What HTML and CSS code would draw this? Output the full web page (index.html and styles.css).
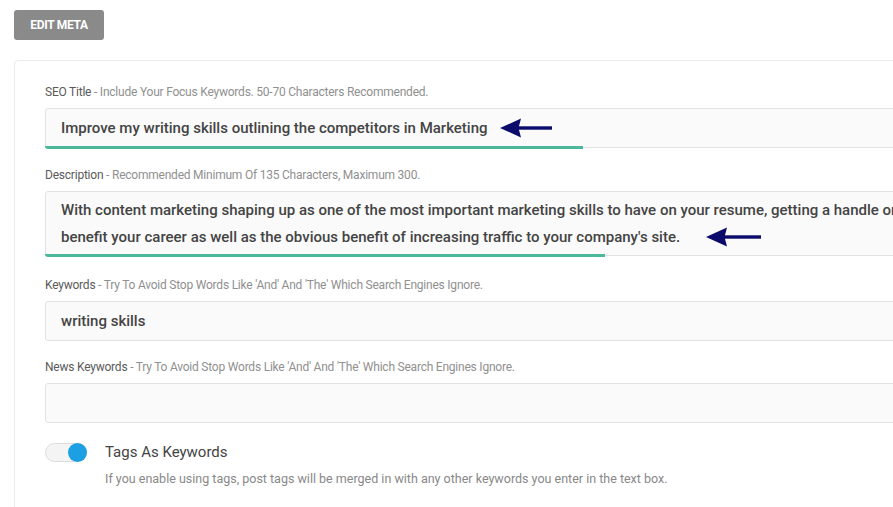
FILE: index.html
```html
<!DOCTYPE html>
<html lang="en">
<head>
    <meta charset="UTF-8">
    <meta name="viewport" content="width=device-width, initial-scale=1.0">
    <title>Edit Meta</title>
    <link rel="stylesheet" href="styles.css">
</head>
<body>
    <button class="edit-btn" type="button">EDIT META</button>

    <div class="card">
        <div class="field">
            <div class="label"><strong>SEO Title</strong> - Include Your Focus Keywords. 50-70 Characters Recommended.</div>
            <div class="input">
                <span>Improve my writing skills outlining the competitors in Marketing</span>
                <svg class="arrow arrow-title" width="52" height="20" viewBox="0 0 52 20">
                    <path d="M0 10 L21 0.5 L18.5 10 L21 19.5 Z" fill="#0b0b6b"/>
                    <rect x="18" y="8.3" width="34" height="3.4" fill="#0b0b6b"/>
                </svg>
                <div class="bar" style="width: 538px"></div>
            </div>
        </div>

        <div class="field field-desc">
            <div class="label"><strong>Description</strong> - Recommended Minimum Of 135 Characters, Maximum 300.</div>
            <div class="input textarea">
                <div class="line">With content marketing shaping up as one of the most important marketing skills to have on your resume, getting a handle on it</div>
                <div class="line">benefit your career as well as the obvious benefit of increasing traffic to your company's site.
                    <svg class="arrow arrow-desc" width="55" height="20" viewBox="0 0 55 20">
                        <path d="M0 10 L21 0.5 L18.5 10 L21 19.5 Z" fill="#0b0b6b"/>
                        <rect x="18" y="8.3" width="37" height="3.4" fill="#0b0b6b"/>
                    </svg>
                </div>
                <div class="bar" style="width: 560px"></div>
            </div>
        </div>

        <div class="field field-keywords">
            <div class="label"><strong>Keywords</strong> - Try To Avoid Stop Words Like 'And' And 'The' Which Search Engines Ignore.</div>
            <div class="input"><span>writing skills</span></div>
        </div>

        <div class="field">
            <div class="label"><strong>News Keywords</strong> - Try To Avoid Stop Words Like 'And' And 'The' Which Search Engines Ignore.</div>
            <div class="input"></div>
        </div>

        <div class="toggle-row">
            <div class="toggle"><div class="knob"></div></div>
            <div class="toggle-text">
                <div class="toggle-title">Tags As Keywords</div>
                <div class="toggle-desc">If you enable using tags, post tags will be merged in with any other keywords you enter in the text box.</div>
            </div>
        </div>
    </div>
</body>
</html>
```

FILE: styles.css
```css
body {
    margin: 0;
    padding: 10px 0 0 14px;
    font-family: Roboto, "Liberation Sans", sans-serif;
    background: #fff;
    overflow: hidden;
}
.edit-btn {
    display: block;
    width: 90px;
    height: 30px;
    padding: 0;
    border: none;
    border-radius: 3px;
    background: #8a8a8a;
    color: #fff;
    font-family: Roboto, "Liberation Sans", sans-serif;
    font-size: 12px;
    font-weight: 700;
    letter-spacing: -0.3px;
    margin-bottom: 20px;
}
.card {
    width: 1100px;
    border: 1px solid #ebebeb;
    border-radius: 4px;
    padding: 23px 30px 40px;
}
.field {
    margin-bottom: 19px;
}
.field-desc {
    margin-bottom: 21px;
}
.field-keywords {
    margin-bottom: 18px;
}
.label {
    font-size: 12px;
    line-height: 16px;
    color: #909090;
    margin-bottom: 8px;
    letter-spacing: -0.22px;
}
.label strong {
    font-weight: 400;
    color: #5a5a5a;
}
.input {
    position: relative;
    height: 38px;
    line-height: 38px;
    padding: 0 15px;
    border: 1px solid #e2e2e2;
    border-radius: 3px;
    background: #fafafa;
    font-size: 15px;
    font-weight: 500;
    color: #444;
    white-space: nowrap;
}
.input.textarea {
    height: 54px;
    line-height: 27px;
    padding: 5px 15px 4px;
}
.arrow {
    vertical-align: middle;
    position: relative;
    top: -1px;
}
.arrow-title {
    margin-left: 9px;
}
.arrow-desc {
    margin-left: 22px;
}
.bar {
    position: absolute;
    left: -1px;
    bottom: -2px;
    height: 3px;
    background: #4bb89b;
    border-radius: 0 0 0 3px;
}
.toggle-row {
    display: flex;
    align-items: flex-start;
    gap: 18px;
    margin-top: 20px;
}
.toggle {
    position: relative;
    box-sizing: border-box;
    width: 42px;
    height: 19px;
    border: 1px solid #dcdcdc;
    border-radius: 10px;
    background: #f4f4f4;
}
.knob {
    position: absolute;
    right: -1px;
    top: -1px;
    width: 19px;
    height: 19px;
    border-radius: 50%;
    background: #1c9fe3;
}
.toggle-title {
    font-size: 15px;
    line-height: 19px;
    color: #444;
}
.toggle-desc {
    font-size: 12.5px;
    line-height: 16px;
    color: #888;
    margin-top: 9px;
}
```
